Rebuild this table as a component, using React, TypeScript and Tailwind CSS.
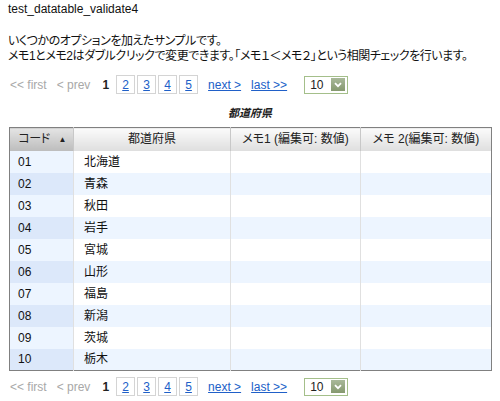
import { useState } from "react";

const prefs = [
  ["01", "北海道"],
  ["02", "青森"],
  ["03", "秋田"],
  ["04", "岩手"],
  ["05", "宮城"],
  ["06", "山形"],
  ["07", "福島"],
  ["08", "新潟"],
  ["09", "茨城"],
  ["10", "栃木"],
];

function Pager() {
  return (
    <div className="flex items-center h-[19px] pl-[2px] text-[12px]">
      <span className="text-[#a8a8a8]">&lt;&lt; first</span>
      <span className="text-[#a8a8a8] ml-[10px]">&lt; prev</span>
      <span className="font-bold text-[#222] ml-[12px]">1</span>
      <div className="flex gap-[2px] ml-[7px]">
        {["2", "3", "4", "5"].map((n) => (
          <span
            key={n}
            className="w-[19px] h-[19px] border border-[#d4d4d4] flex items-center justify-center text-[#2060c8] underline"
          >
            {n}
          </span>
        ))}
      </div>
      <span className="ml-[10px] text-[#2060c8] underline">next &gt;</span>
      <span className="ml-[10px] text-[#2060c8] underline">last &gt;&gt;</span>
      <div className="ml-[17px] w-[44px] h-[18px] border border-[#a4bf8a] bg-white flex items-center justify-between pl-[5px] pr-[2px]">
        <span className="text-[#222]">10</span>
        <span className="w-[14px] h-[13px] bg-gradient-to-b from-[#a9b99a] to-[#86996f] flex items-center justify-center">
          <svg width="8" height="6" viewBox="0 0 8 6">
            <path d="M1 1.2 L4 4.2 L7 1.2" stroke="white" strokeWidth="1.8" fill="none" />
          </svg>
        </span>
      </div>
    </div>
  );
}

export default function App() {
  const [rows] = useState(prefs);

  return (
    <div
      className="w-[500px] h-[401px] bg-white text-[#111] px-2 pt-[2px] [font-feature-settings:'palt']"
      style={{ fontFamily: '"Liberation Sans", "Noto Sans CJK JP", sans-serif' }}
    >
      <p className="text-[12px] leading-[15px]">test_datatable_validate4</p>
      <div className="mt-[17px] text-[12px] leading-[15px] tracking-[-0.45px]">
        <p>いくつかのオプションを加えたサンプルです。</p>
        <p>メモ1とメモ2はダブルクリックで変更できます。「メモ１＜メモ２」という相関チェックを行います。</p>
      </div>
      <div className="mt-[11px]">
        <Pager />
      </div>
      <p className="mt-[12px] text-center text-[11px] italic font-bold text-[#222] leading-[14px]">
        都道府県
      </p>
      <table className="mt-[7px] ml-[1px] w-[483px] border-collapse border border-[#808080] table-fixed text-[12px]">
        <thead>
          <tr className="h-[23px]">
            <th className="w-[64px] border-r border-[#c8c8c8] bg-gradient-to-b from-[#e4e4e4] to-[#bcbcbc] font-normal text-right pr-[7px] text-[#222] tracking-[-0.5px]">
              コード<span className="text-[8px] align-[1px] ml-[9px]">▲</span>
            </th>
            <th className="w-[157px] border-r border-[#c8c8c8] bg-gradient-to-b from-[#fbfbfb] to-[#dedede] font-normal text-[#222]">
              都道府県
            </th>
            <th className="w-[130px] border-r border-[#c8c8c8] bg-gradient-to-b from-[#fbfbfb] to-[#dedede] font-normal text-[#222]">
              メモ1 (編集可: 数値)
            </th>
            <th className="bg-gradient-to-b from-[#fbfbfb] to-[#dedede] font-normal text-[#222]">
              メモ 2(編集可: 数値)
            </th>
          </tr>
        </thead>
        <tbody>
          {rows.map(([code, name], i) => (
            <tr key={code} className={`h-[22px] ${i % 2 === 1 ? "bg-[#edf5ff]" : "bg-white"}`}>
              <td
                className={`border-r border-[#e0e0e0] pl-[8px] ${i % 2 === 1 ? "bg-[#dce8fa]" : "bg-[#edf5ff]"}`}
              >
                {code}
              </td>
              <td className="border-r border-[#e0e0e0] pl-[10px]">{name}</td>
              <td className="border-r border-[#e0e0e0]"></td>
              <td></td>
            </tr>
          ))}
        </tbody>
      </table>
      <div className="mt-[6px]">
        <Pager />
      </div>
    </div>
  );
}
